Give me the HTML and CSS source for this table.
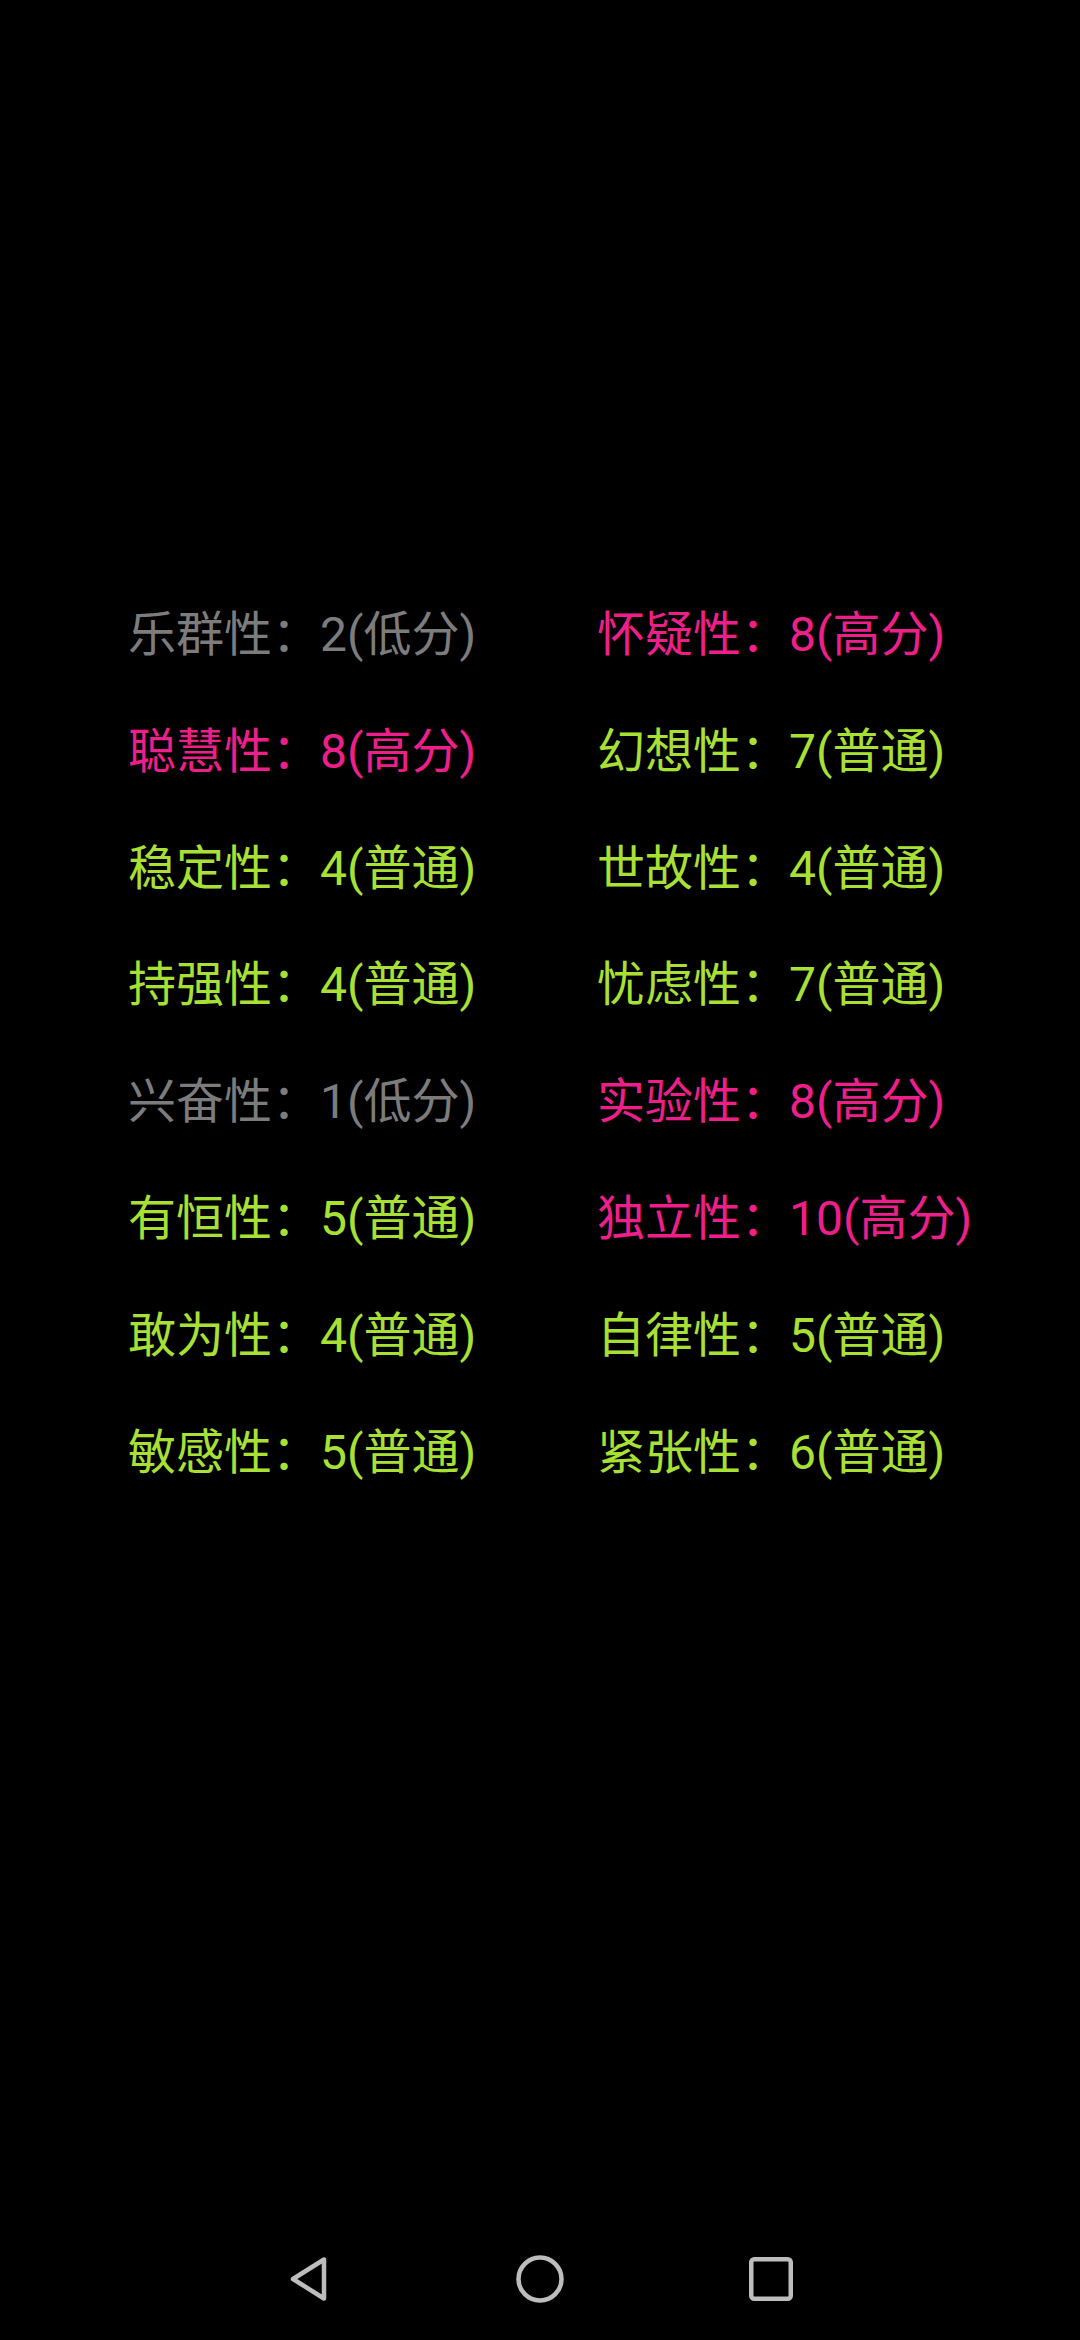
FILE: index.html
```html
<!DOCTYPE html>
<html lang="zh-CN">
<head>
<meta charset="utf-8">
<link rel="stylesheet" href="styles.css">
</head>
<body>
<div class="screen">
  <main class="content">
    <div class="grid">
      <div class="item low">乐群性：2(低分)</div>
      <div class="item high">怀疑性：8(高分)</div>
      <div class="item high">聪慧性：8(高分)</div>
      <div class="item normal">幻想性：7(普通)</div>
      <div class="item normal">稳定性：4(普通)</div>
      <div class="item normal">世故性：4(普通)</div>
      <div class="item normal">持强性：4(普通)</div>
      <div class="item normal">忧虑性：7(普通)</div>
      <div class="item low">兴奋性：1(低分)</div>
      <div class="item high">实验性：8(高分)</div>
      <div class="item normal">有恒性：5(普通)</div>
      <div class="item high">独立性：10(高分)</div>
      <div class="item normal">敢为性：4(普通)</div>
      <div class="item normal">自律性：5(普通)</div>
      <div class="item normal">敏感性：5(普通)</div>
      <div class="item normal">紧张性：6(普通)</div>
    </div>
  </main>
  <nav class="navbar">
    <svg class="nav-icon" viewBox="0 0 48 48" width="48" height="48">
      <path d="M39 4.5 L39 43.5 L8 24 Z" fill="none" stroke="#bdbdbd" stroke-width="4.5" stroke-linejoin="round"/>
    </svg>
    <svg class="nav-icon" viewBox="0 0 48 48" width="48" height="48">
      <circle cx="24" cy="24" r="21.5" fill="none" stroke="#bdbdbd" stroke-width="4.5"/>
    </svg>
    <svg class="nav-icon" viewBox="0 0 48 48" width="48" height="48">
      <rect x="4.25" y="4.25" width="39.5" height="39.5" rx="3" fill="none" stroke="#bdbdbd" stroke-width="4.5"/>
    </svg>
  </nav>
</div>
</body>
</html>
```

FILE: styles.css
```css
html, body {
  margin: 0;
  padding: 0;
  background: #000;
}

.screen {
  width: 1080px;
  height: 2340px;
  display: flex;
  flex-direction: column;
  background: #000;
  font-family: Roboto, "Noto Sans CJK SC", sans-serif;
}

.content {
  flex: 1;
  padding-top: 577px;
}

.grid {
  display: grid;
  grid-template-columns: 469px auto;
  grid-auto-rows: 116.8px;
  padding-left: 128px;
}

.item {
  font-size: 48px;
  line-height: 116.8px;
  white-space: nowrap;
}

.low {
  color: #7c7c7c;
}

.high {
  color: #ee1f8a;
}

.normal {
  color: #a8e133;
}

.navbar {
  height: 124px;
  display: flex;
  justify-content: center;
  align-items: flex-start;
  gap: 183px;
  padding-top: 39px;
  box-sizing: border-box;
}

.nav-icon {
  display: block;
}
```
